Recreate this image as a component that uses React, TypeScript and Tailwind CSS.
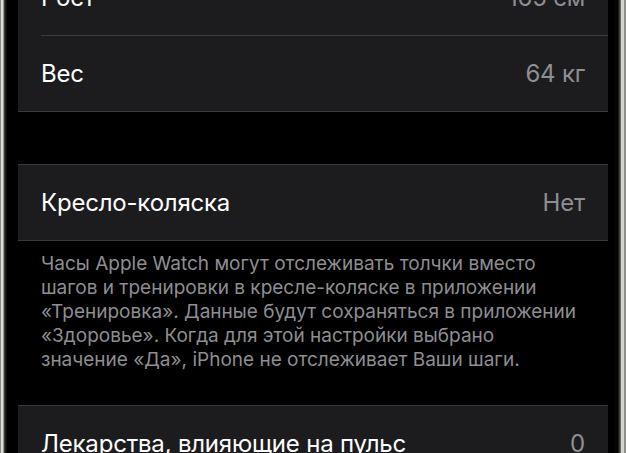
import React from "react";

type Row = { label: string; value: string };

const bodyRows: Row[] = [
  { label: "Рост", value: "165 см" },
  { label: "Вес", value: "64 кг" },
];

const footnote = [
  "Часы Apple Watch могут отслеживать толчки вместо",
  "шагов и тренировки в кресле-коляске в приложении",
  "«Тренировка». Данные будут сохраняться в приложении",
  "«Здоровье». Когда для этой настройки выбрано",
  "значение «Да», iPhone не отслеживает Ваши шаги.",
];

function Cell({ label, value, divider }: Row & { divider?: boolean }) {
  return (
    <div className="pl-[23px]">
      <div
        className={[
          "flex items-center justify-between pr-[23px] h-[75px]",
          divider ? "border-b border-[#3a3a3c]" : "",
        ].join(" ")}
      >
        <span className="text-white">{label}</span>
        <span className="text-[#8e8e93]">{value}</span>
      </div>
    </div>
  );
}

export default function App() {
  return (
    <div
      className="w-[626px] h-[453px] overflow-hidden bg-black flex"
      style={{ fontFamily: "Inter, 'Noto Sans', sans-serif" }}
    >
      {/* левая грань корпуса */}
      <div className="flex shrink-0">
        <div className="w-px bg-[#8a8a86]" />
        <div className="w-[2px] bg-[#dcdcd6]" />
        <div className="w-px bg-[#9a9a96]" />
        <div className="w-px bg-[#3c3c3c]" />
        <div className="w-px bg-[#1e1e1e]" />
        <div className="w-px bg-[#0c0c0c]" />
      </div>

      {/* экран */}
      <div className="flex-1 pl-[11px] pr-[6px] text-[24px] tracking-[-0.2px]">
        <div className="-mt-[39px] bg-[#1c1c1e] border-b border-[#3a3a3c]">
          <Cell {...bodyRows[0]} divider />
          <Cell {...bodyRows[1]} />
        </div>

        <div className="h-[52px]" />

        <div className="bg-[#1c1c1e] border-y border-[#3a3a3c]">
          <Cell label="Кресло-коляска" value="Нет" />
        </div>

        <p className="pl-[23px] pt-[11px] pb-[33px] text-[19px] leading-[24px] tracking-normal text-[#8e8e93]">
          {footnote.map((line) => (
            <span key={line} className="block whitespace-nowrap">
              {line}
            </span>
          ))}
        </p>

        <div className="bg-[#1c1c1e] border-t border-[#3a3a3c]">
          <div className="flex items-center justify-between pl-[23px] pr-[23px] h-[76px]">
            <span className="text-white">Лекарства, влияющие на пульс</span>
            <span className="text-[#8e8e93]">0</span>
          </div>
        </div>
      </div>

      {/* правая грань корпуса */}
      <div className="flex shrink-0">
        <div className="w-[4px] bg-[#050505]" />
        <div className="w-px bg-[#1c1c1c]" />
        <div className="w-px bg-[#3a3a3a]" />
        <div className="w-px bg-[#6a6a68]" />
        <div className="w-[3px] bg-[#d4d4ce]" />
        <div className="w-[2px] bg-[#8e8e8a]" />
      </div>
    </div>
  );
}
